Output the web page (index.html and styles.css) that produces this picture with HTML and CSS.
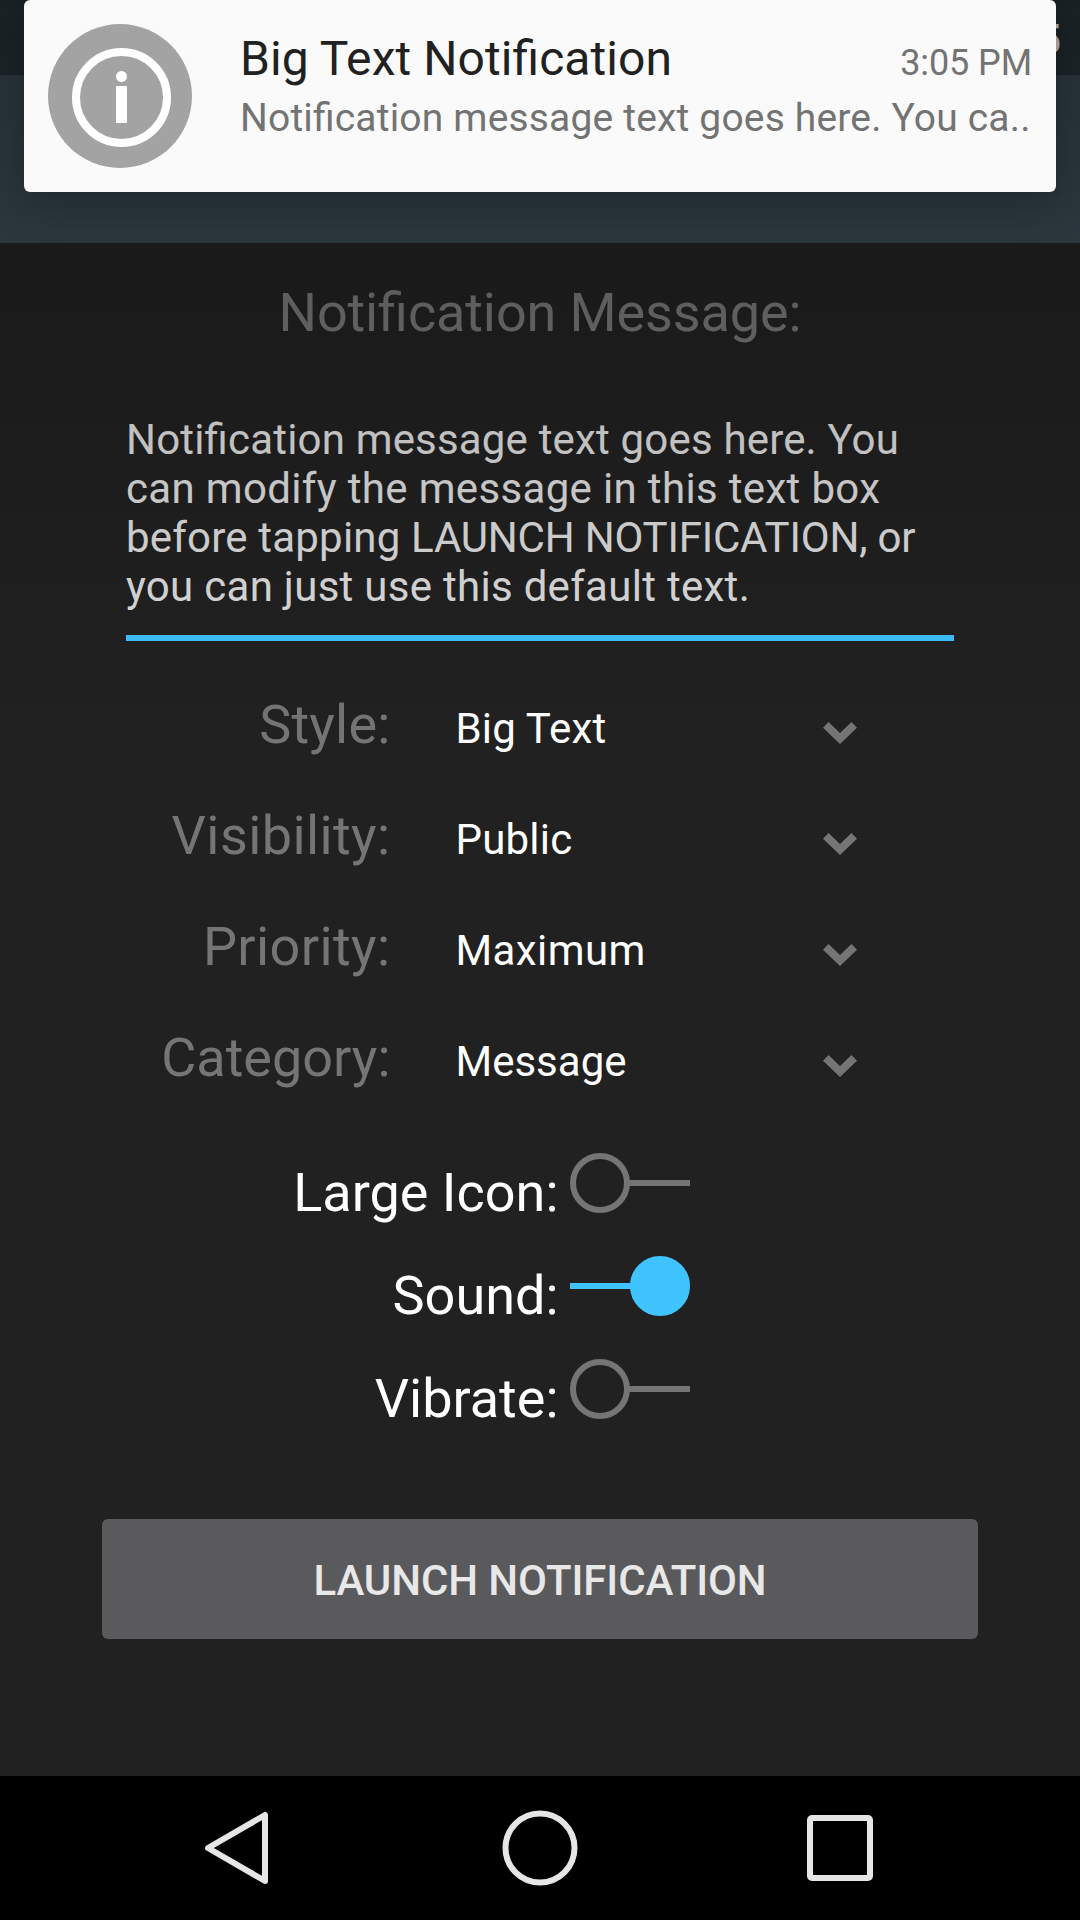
FILE: index.html
```html
<!DOCTYPE html>
<html lang="en">
<head>
<meta charset="utf-8">
<title>Notifications</title>
<link rel="stylesheet" href="styles.css">
</head>
<body>
<div class="screen">
  <header class="status-bar"><span class="clock">3:05</span></header>
  <div class="toolbar"></div>

  <main class="content">
    <h1 class="heading">Notification Message:</h1>
    <div class="message-field">
      <div class="line-a">Notification message text goes here. You</div>
      <div class="line-b">can modify the message in this text box</div>
      <div class="line-c"><span class="snug">before tapping </span>LAUNCH NOTIFICATION, or</div>
      <div class="line-d">you can just use this default text.</div>
    </div>

    <div class="options">
      <div class="option">
        <span class="option-label snug">Style:</span><span class="option-value snug">Big Text</span>
        <svg class="chevron" viewBox="0 0 34 22"><path d="M5.5 0L17 11 28.5 0 34 5.8 17 22 0 5.8z"/></svg>
      </div>
      <div class="option">
        <span class="option-label loose">Visibility:</span><span class="option-value snug">Public</span>
        <svg class="chevron" viewBox="0 0 34 22"><path d="M5.5 0L17 11 28.5 0 34 5.8 17 22 0 5.8z"/></svg>
      </div>
      <div class="option">
        <span class="option-label loose">Priority:</span><span class="option-value loose">Maximum</span>
        <svg class="chevron" viewBox="0 0 34 22"><path d="M5.5 0L17 11 28.5 0 34 5.8 17 22 0 5.8z"/></svg>
      </div>
      <div class="option">
        <span class="option-label">Category:</span><span class="option-value">Message</span>
        <svg class="chevron" viewBox="0 0 34 22"><path d="M5.5 0L17 11 28.5 0 34 5.8 17 22 0 5.8z"/></svg>
      </div>
    </div>

    <div class="switches">
      <div class="switch-row">
        <span class="switch-label">Large Icon:</span>
        <svg class="switch" viewBox="0 0 120 60"><circle cx="30" cy="30" r="27"/><path d="M59 30H120"/></svg>
      </div>
      <div class="switch-row">
        <span class="switch-label">Sound:</span>
        <svg class="switch switch-on" viewBox="0 0 120 60"><path d="M0 30H62"/><circle cx="90" cy="30" r="27"/></svg>
      </div>
      <div class="switch-row">
        <span class="switch-label">Vibrate:</span>
        <svg class="switch" viewBox="0 0 120 60"><circle cx="30" cy="30" r="27"/><path d="M59 30H120"/></svg>
      </div>
    </div>

    <button class="launch" type="button">LAUNCH NOTIFICATION</button>
  </main>

  <nav class="nav-bar">
    <svg class="nav-icon" viewBox="0 0 144 144"><path d="M97 39V105L40 72z"/></svg>
    <svg class="nav-icon" viewBox="0 0 144 144"><circle cx="72" cy="72" r="34.5"/></svg>
    <svg class="nav-icon" viewBox="0 0 144 144"><rect x="42" y="42" width="60" height="60" rx="2"/></svg>
  </nav>

  <div class="scrim"></div>

  <aside class="heads-up">
    <svg class="app-icon" viewBox="0 0 144 144">
      <circle class="disc" cx="72" cy="72" r="72"/>
      <circle class="ring" cx="73.5" cy="73.5" r="45.5"/>
      <circle class="dot" cx="73.5" cy="52.5" r="5.5"/>
      <rect class="dot" x="68" y="62" width="11" height="37" rx="1"/>
    </svg>
    <div class="notice">
      <div class="notice-top"><span class="notice-title">Big Text Notification</span><span class="notice-time">3:05 PM</span></div>
      <div class="notice-text">Notification message text goes here. You ca..</div>
    </div>
  </aside>
</div>
</body>
</html>
```

FILE: styles.css
```css
* { box-sizing: border-box; }

body {
  margin: 0;
  background: #212121;
  font-family: Roboto, sans-serif;
  font-feature-settings: "liga" 1;
}

.screen {
  position: relative;
  display: flex;
  flex-direction: column;
  width: 1080px;
  height: 1920px;
  overflow: hidden;
  background: #212121;
}

.status-bar {
  display: flex;
  justify-content: flex-end;
  height: 75px;
  padding: 2px 19px 0 0;
  background: #263238;
}

.clock {
  color: #fff;
  font-size: 42px;
  font-weight: 500;
  line-height: 75px;
}

.toolbar {
  height: 168px;
  background: #37474f;
}

.content {
  display: flex;
  flex-direction: column;
  flex: 1;
  padding: 38px 102px 0;
}

.heading {
  margin: 0;
  color: #757575;
  font-size: 54px;
  font-weight: 400;
  line-height: 64px;
  letter-spacing: -0.12px;
  text-align: center;
}

.message-field {
  margin: 70px 24px 28px;
  padding-bottom: 24px;
  border-bottom: 6px solid #40c4ff;
  color: #e0e0e0;
  font-size: 42px;
  line-height: 49px;
  white-space: nowrap;
}

.line-a { letter-spacing: 0.18px; }
.line-b { letter-spacing: 0.34px; }
.line-c { letter-spacing: -0.2px; }
.line-d { letter-spacing: 0.29px; }

.option {
  display: grid;
  grid-template-columns: 290px 367px 34px;
  column-gap: 0;
  align-items: baseline;
  height: 111px;
}

.option-label {
  padding-right: 1.5px;
  color: #757575;
  font-size: 54px;
  line-height: 111px;
  text-align: right;
}

.option-value {
  padding-left: 63.5px;
  color: #fff;
  font-size: 42px;
}

.snug { letter-spacing: 0.2px; }
.loose { letter-spacing: 0.4px; }

.chevron {
  align-self: start;
  width: 34px;
  height: 22px;
  margin-top: 53px;
  margin-left: 64px;
  fill: #757575;
}

.switches { margin-top: 40px; }

.switch-row {
  display: grid;
  grid-template-columns: 456.5px 120px;
  column-gap: 11.5px;
  height: 103px;
}

.switch-label {
  margin-top: 8px;
  color: #fff;
  font-size: 54px;
  line-height: 64px;
  text-align: right;
}

.switch {
  width: 120px;
  height: 60px;
  fill: none;
  stroke: #757575;
  stroke-width: 6;
}

.switch-on { stroke: #40c4ff; }
.switch-on circle { fill: #40c4ff; }

.launch {
  height: 120px;
  margin-top: 57px;
  padding: 3px 0 0;
  border: 0;
  border-radius: 6px;
  background: #5a5a5c;
  color: #e8e8e8;
  font: 500 42px/49px Roboto, sans-serif;
  letter-spacing: -0.08px;
}

.nav-bar {
  display: flex;
  justify-content: center;
  gap: 156px;
  height: 144px;
  background: #000;
}

.nav-icon {
  width: 144px;
  height: 144px;
  fill: none;
  stroke: #e6e6e6;
  stroke-width: 6;
  stroke-linejoin: round;
}

.scrim {
  position: absolute;
  inset: 0 0 auto;
  height: 750px;
  background: linear-gradient(rgba(0, 0, 0, 0.333), rgba(0, 0, 0, 0));
}

.heads-up {
  position: absolute;
  top: 0;
  left: 24px;
  display: flex;
  gap: 48px;
  width: 1032px;
  height: 192px;
  padding: 24px;
  border-radius: 6px;
  background: #fafafa;
  box-shadow: 0 10px 40px rgba(0, 0, 0, 0.25);
}

.app-icon { flex: none; width: 144px; height: 144px; }
.disc { fill: #a3a3a3; }
.ring { fill: none; stroke: #fff; stroke-width: 8; }
.dot { fill: #fff; }

.notice { flex: 1; min-width: 0; padding-top: 6px; white-space: nowrap; }

.notice-top {
  display: flex;
  justify-content: space-between;
  align-items: baseline;
}

.notice-title { color: #212121; font-size: 48px; line-height: 57px; letter-spacing: 0.06px; }
.notice-time { color: #737373; font-size: 36px; letter-spacing: -0.1px; }
.notice-text { margin-top: 8px; color: #737373; font-size: 39px; line-height: 46px; letter-spacing: 0.17px; }
```
